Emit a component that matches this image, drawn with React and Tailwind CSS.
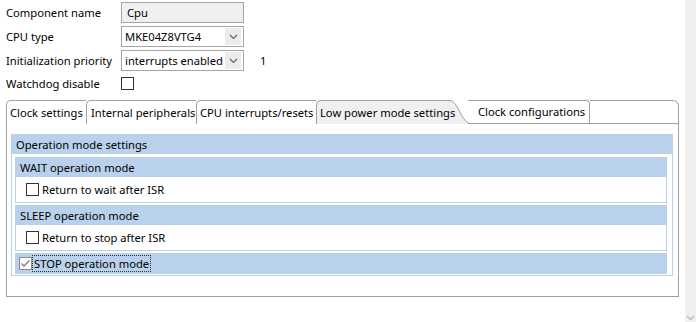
import React from "react";

function Chevron() {
  return (
    <svg width="9" height="6" viewBox="0 0 9 6" className="block">
      <path d="M1 1 L4.5 4.5 L8 1" fill="none" stroke="#606060" strokeWidth="1.2" />
    </svg>
  );
}

function Dropdown({ value }) {
  return (
    <div className="flex items-center w-[123px] h-[21px] border border-[#a6a6a6] bg-white">
      <div className="flex-1 pl-[3px] leading-none whitespace-nowrap">{value}</div>
      <div className="w-[16px] h-[17px] mr-[2px] bg-[#ececec] flex items-center justify-center shrink-0">
        <Chevron />
      </div>
    </div>
  );
}

function Box({ checked, muted }) {
  return (
    <div
      className={
        "w-[13px] h-[13px] border bg-white flex items-center justify-center shrink-0 " +
        (muted ? "border-[#8c8c8c]" : "border-[#333333]")
      }
    >
      {checked && (
        <svg width="11" height="11" viewBox="0 0 11 11" className="block">
          <path d="M1.5 5.5 L4 8 L9.5 2.5" fill="none" stroke="#7a7a7a" strokeWidth="1.3" />
        </svg>
      )}
    </div>
  );
}

function Row({ label, children, extra }) {
  return (
    <div className="flex items-center h-[21px]">
      <div className="w-[115px] whitespace-nowrap leading-none">{label}</div>
      {children}
      {extra}
    </div>
  );
}

function SubGroup({ title, item }) {
  return (
    <div className="border border-[#b9d1ea]">
      <div className="h-[19px] bg-[#b9d1ea] pl-[4px] flex items-center leading-none">{title}</div>
      <div className="h-[25px] bg-white flex items-center pl-[10px] gap-[3px]">
        <Box />
        <span className="leading-none">{item}</span>
      </div>
    </div>
  );
}

function Tab({ label, w, className = "" }) {
  return (
    <div
      className={
        "h-full flex items-center whitespace-nowrap leading-none border-t border-l border-[#a0a0a0] rounded-tl-[5px] pl-[3px] shrink-0 " +
        className
      }
      style={{ width: w }}
    >
      {label}
    </div>
  );
}

export default function App() {
  return (
    <div
      className="flex w-[696px] h-[322px] bg-white text-[11.2px] text-black overflow-hidden"
      style={{ fontFamily: "'Noto Sans', 'DejaVu Sans', sans-serif" }}
    >
      <div className="w-[685px] flex flex-col">
        <div className="pl-[6px] pt-[2px] flex flex-col gap-[3px]">
          <Row label="Component name">
            <div className="w-[123px] h-[21px] border border-[#a6a6a6] bg-[#f0f0f0] pl-[5px] flex items-center leading-none">
              Cpu
            </div>
          </Row>
          <Row label="CPU type">
            <Dropdown value="MKE04Z8VTG4" />
          </Row>
          <Row
            label="Initialization priority"
            extra={<span className="ml-[16px] leading-none">1</span>}
          >
            <Dropdown value="interrupts enabled" />
          </Row>
          <div className="flex items-center h-[15px] mt-[2px]">
            <div className="w-[115px] whitespace-nowrap leading-none">Watchdog disable</div>
            <Box />
          </div>
        </div>

        <div className="ml-[6px] mt-[9px] w-[673px] flex flex-col">
          <div className="flex h-[24px]">
            <Tab label="Clock settings" w={80} />
            <Tab label="Internal peripherals" w={110} className="pl-[4px]" />
            <Tab label="CPU interrupts/resets" w={120} className="pl-[3px]" />
            <Tab label="Low power mode settings" w={134} className="bg-[#f0f0f0] pl-[3px] relative z-10" />
            <svg width="20" height="24" viewBox="0 0 20 24" className="block shrink-0">
              <path d="M0 0 L0 24 L20 24 C14 22 10 6 2 0.5 Z" fill="#f0f0f0" />
              <path d="M0 0.5 C8 1 10 20 19.5 23.5" fill="none" stroke="#a0a0a0" strokeWidth="1" />
            </svg>
            <div className="w-[122px] h-full flex items-center whitespace-nowrap leading-none border-t border-r border-b border-[#a0a0a0] rounded-tr-[4px] pl-[10px] -ml-[2px] shrink-0">
              Clock configurations
            </div>
            <div className="flex-1 h-full border-t border-r border-b border-[#a0a0a0] rounded-tr-[6px]" />
          </div>
          <div className="h-[173px] border-l border-r border-b border-[#a0a0a0] pt-[10px] pl-[4px] pr-[5px]">
            <div className="border border-[#b9d1ea]">
              <div className="h-[19px] bg-[#b9d1ea] pl-[4px] flex items-center leading-none">
                Operation mode settings
              </div>
              <div className="pt-[3px] pl-[3px] pr-[5px] pb-[1px] flex flex-col gap-[2px]">
                <SubGroup title="WAIT operation mode" item="Return to wait after ISR" />
                <SubGroup title="SLEEP operation mode" item="Return to stop after ISR" />
                <div className="h-[21px] bg-[#b9d1ea] flex items-center pl-[4px] gap-[1px]">
                  <Box checked muted />
                  <span className="leading-none px-[1px] py-[2px] outline outline-1 outline-dotted outline-[#333]">
                    STOP operation mode
                  </span>
                </div>
              </div>
            </div>
          </div>
        </div>
      </div>
      <div className="flex-1 bg-[#f0f0f0] flex flex-col justify-end items-center">
        <svg width="9" height="6" viewBox="0 0 9 6" className="block mb-[1px]">
          <path d="M1 1 L4.5 4.5 L8 1" fill="none" stroke="#bdbdbd" strokeWidth="1.5" />
        </svg>
      </div>
    </div>
  );
}
